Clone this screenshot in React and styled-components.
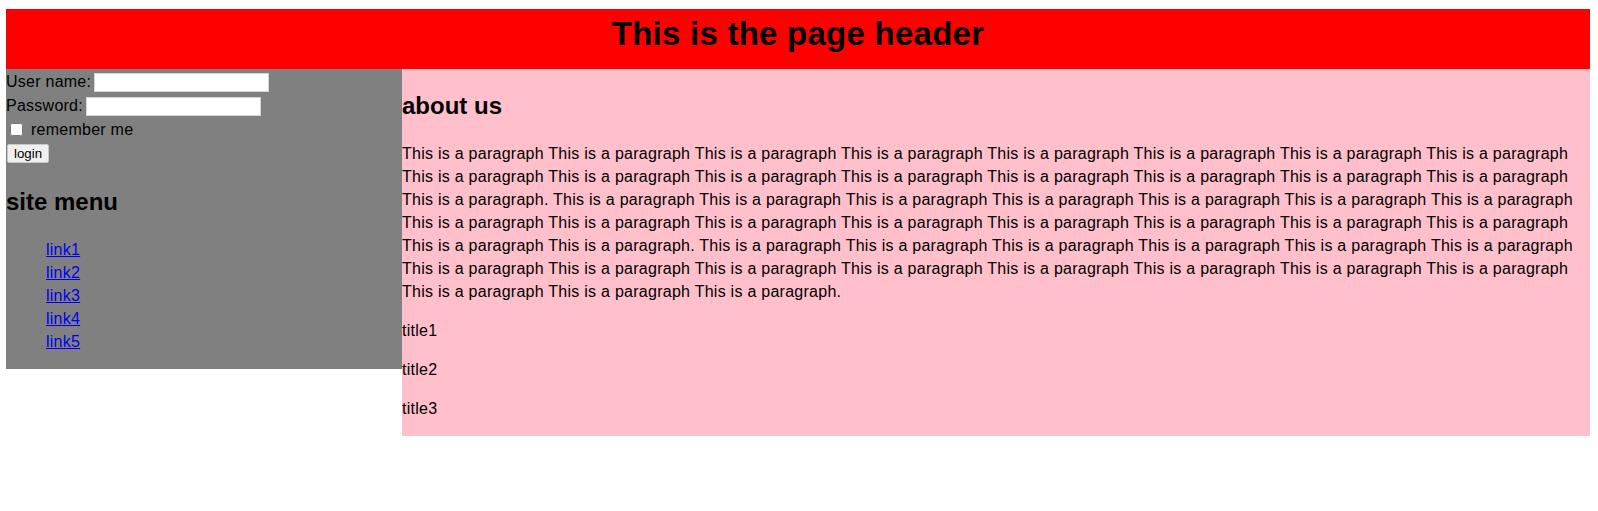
import { createGlobalStyle } from 'styled-components';
import styled from 'styled-components';

const phrase = 'This is a paragraph';
const sentence = Array(17).fill(phrase).join(' ') + '.';
const aboutText = [sentence, sentence, sentence].join(' ');

const links = ['link1', 'link2', 'link3', 'link4', 'link5'];
const titles = ['title1', 'title2', 'title3'];

function App() {
  return (
    <>
      <GlobalStyle />
      <Header>
        <PageTitle>This is the page header</PageTitle>
      </Header>
      <Main>
        <Sidebar>
          <form onSubmit={(e) => e.preventDefault()}>
            <FieldRow>
              <label htmlFor="user">User name:</label>
              <TextInput id="user" type="text" />
            </FieldRow>
            <FieldRow>
              <label htmlFor="pass">Password:</label>
              <TextInput id="pass" type="password" />
            </FieldRow>
            <CheckRow>
              <Checkbox id="remember" type="checkbox" />
              <label htmlFor="remember">remember me</label>
            </CheckRow>
            <FieldRow>
              <LoginButton type="submit">login</LoginButton>
            </FieldRow>
          </form>
          <SectionTitle>site menu</SectionTitle>
          <LinkList>
            {links.map(link => (
              <li key={link}>
                <MenuLink href="#">{link}</MenuLink>
              </li>
            ))}
          </LinkList>
        </Sidebar>
        <Content>
          <SectionTitle>about us</SectionTitle>
          <Paragraph wide>{aboutText}</Paragraph>
          {titles.map(title => (
            <Paragraph key={title}>{title}</Paragraph>
          ))}
        </Content>
      </Main>
    </>
  );
}

const GlobalStyle = createGlobalStyle`
  body {
    margin: 9px 8px 0 6px;
    font-family: "Liberation Sans", Arial, sans-serif;
    font-size: 16px;
    line-height: 23px;
    color: #000;
    background: #fff;
  }
`;

const Header = styled.header`
  height: 60px;
  box-sizing: border-box;
  padding-top: 8px;
  background: #ff0000;
  text-align: center;
`;

const PageTitle = styled.h1`
  margin: 0;
  font-size: 33px;
  line-height: 33px;
  letter-spacing: 0.25px;
  font-weight: bold;
`;

const Main = styled.div`
  display: flex;
  align-items: flex-start;
`;

const Sidebar = styled.nav`
  width: 25%;
  background: #808080;
`;

const FieldRow = styled.div`
  display: flex;
  align-items: flex-end;
  height: 24px;
  letter-spacing: 0.25px;
`;

const CheckRow = styled(FieldRow)`
  align-items: center;
`;

const TextInput = styled.input`
  width: 175px;
  height: 19px;
  box-sizing: border-box;
  margin: 0 0 1px 3px;
  padding: 1px 2px;
  border: 1px solid #d4d4d4;
  background: #fff;
  font: 13.33px "Liberation Sans", Arial, sans-serif;
`;

const Checkbox = styled.input`
  width: 13px;
  height: 13px;
  margin: 0 8px 0 4px;
`;

const LoginButton = styled.button`
  height: 19px;
  margin: 0 0 2px 1px;
  padding: 0 6px;
  border: 1px solid #c8c8c8;
  border-radius: 2px;
  background: #efefef;
  color: #000;
  font: 13.33px "Liberation Sans", Arial, sans-serif;
  line-height: 15px;
`;

const SectionTitle = styled.h2`
  margin: 19.92px 0;
  font-size: 24px;
  line-height: 33px;
  font-weight: bold;
`;

const LinkList = styled.ul`
  margin: 16px 0;
  padding-left: 40px;
  list-style: none;
  letter-spacing: 0.25px;
`;

const MenuLink = styled.a`
  color: #0000ee;
  text-decoration: underline;
`;

const Content = styled.section`
  width: 75%;
  background: #ffc0cb;
`;

const Paragraph = styled.p`
  margin: 16px 0;
  letter-spacing: ${props => (props.wide ? '0.26px' : '0.25px')};
`;

export default App;
